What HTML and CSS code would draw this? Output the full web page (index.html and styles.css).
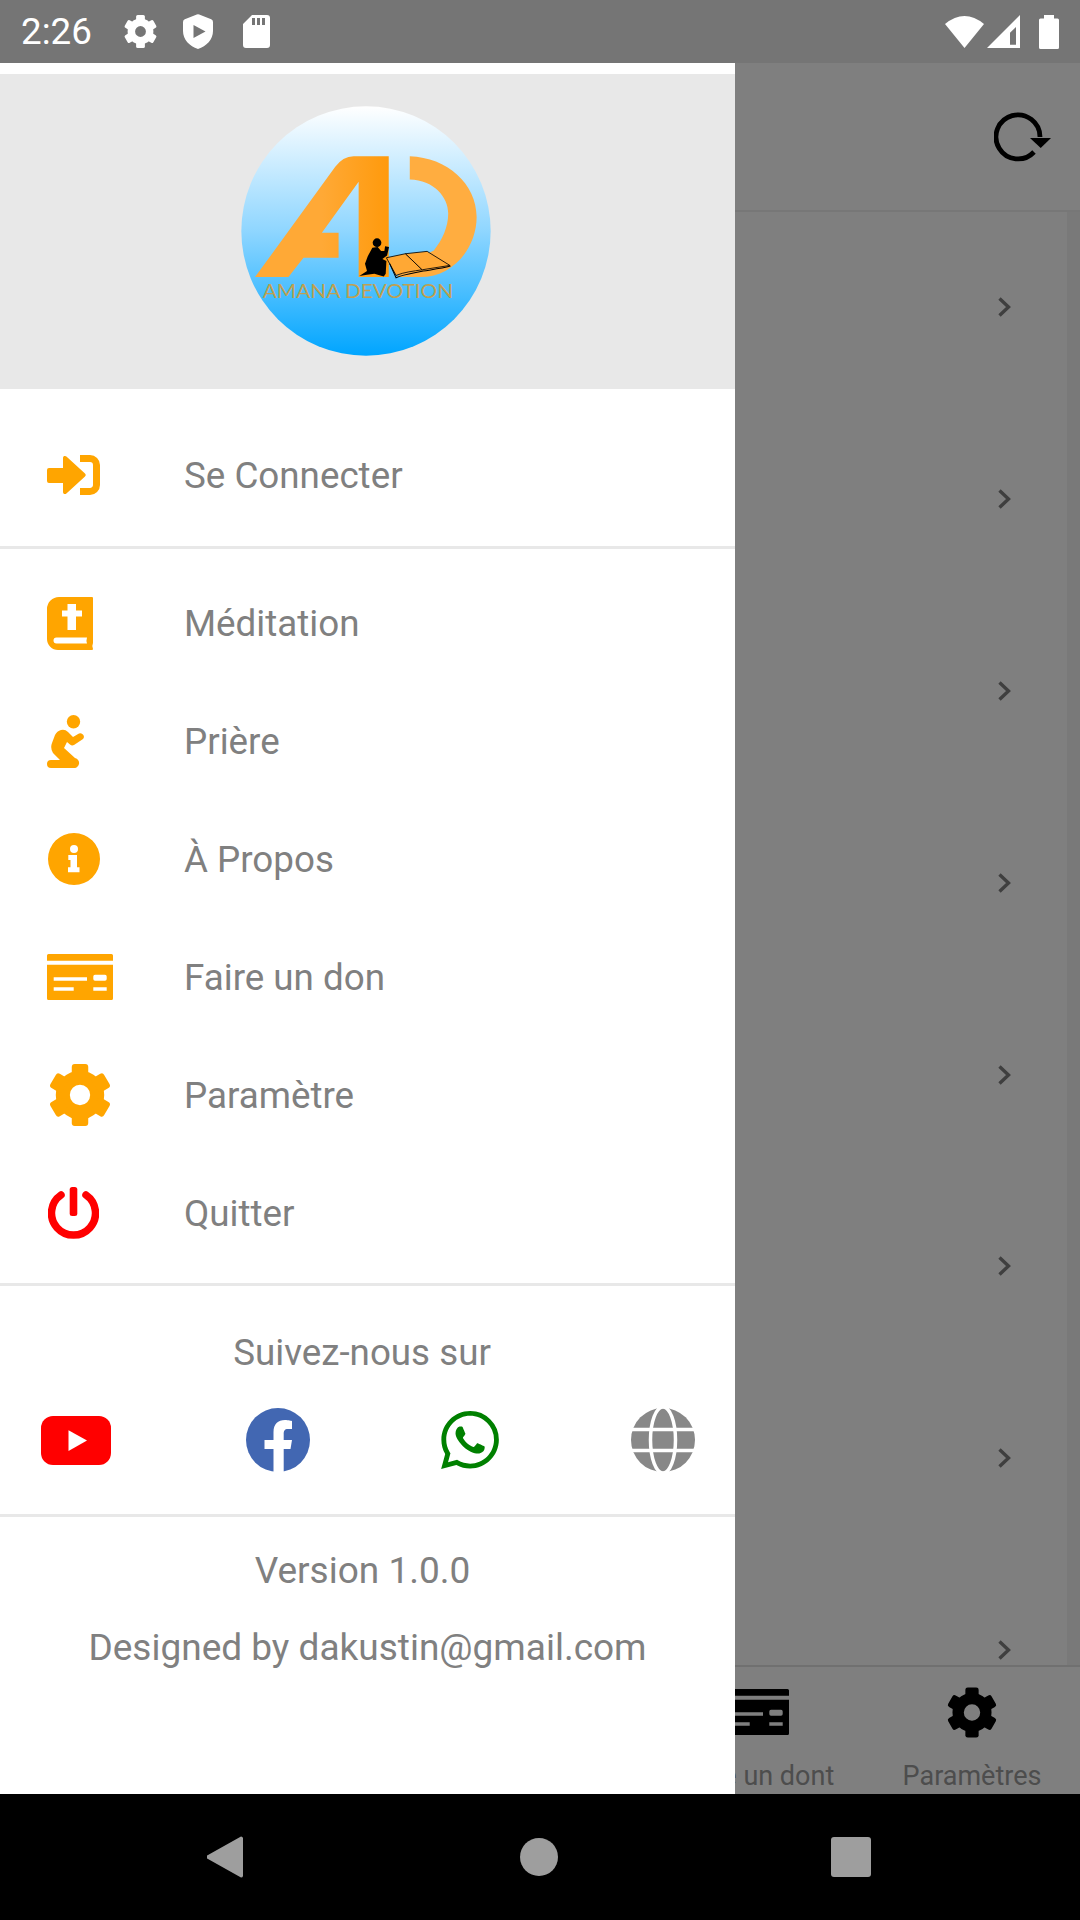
FILE: index.html
```html
<!DOCTYPE html>
<html lang="fr">
<head>
<meta charset="utf-8">
<title>Amana Devotion</title>
<link rel="stylesheet" href="styles.css">
</head>
<body>
<svg class="defs" width="0" height="0" aria-hidden="true">
  <symbol id="gear" viewBox="0 0 64 64">
    <circle cx="32" cy="32" r="17.75" fill="none" stroke="currentColor" stroke-width="14.5"/>
    <g fill="currentColor">
      <rect x="23.5" y="0" width="17" height="14" rx="3"/>
      <rect x="23.5" y="0" width="17" height="14" rx="3" transform="rotate(60 32 32)"/>
      <rect x="23.5" y="0" width="17" height="14" rx="3" transform="rotate(120 32 32)"/>
      <rect x="23.5" y="0" width="17" height="14" rx="3" transform="rotate(180 32 32)"/>
      <rect x="23.5" y="0" width="17" height="14" rx="3" transform="rotate(240 32 32)"/>
      <rect x="23.5" y="0" width="17" height="14" rx="3" transform="rotate(300 32 32)"/>
    </g>
  </symbol>
  <symbol id="card" viewBox="0 0 66 46">
    <path fill="currentColor" d="M1.5 0H64.5A1.5 1.5 0 0 1 66 1.5V6.7H0V1.500A1.500 1.500 0 0 1 1.500 0Z"/>
    <path fill="currentColor" fill-rule="evenodd" d="M0 10.700H66V44.500A1.500 1.500 0 0 1 64.500 46H1.500A1.500 1.500 0 0 1 0 44.500ZM6.700 23.300V26.700H40V23.300ZM6.700 33.300V36.700H26.700V33.300ZM48 20.700A1.700 1.700 0 0 0 46.300 22.400V25A1.700 1.700 0 0 0 48 26.700H58A1.700 1.700 0 0 0 59.700 25V22.400A1.700 1.700 0 0 0 58 20.700ZM46.300 33.300V36.700H59.700V33.300Z"/>
  </symbol>
</svg>

<div class="screen">
  <header class="status">
    <div class="status-left">
      <span class="clock">2:26</span>
      <svg class="st-gear"><use href="#gear"/></svg>
      <svg class="st-shield" viewBox="0 0 30 35"><path fill-rule="evenodd" d="M13.800.400L1.800 5.200A3 3 0 0 0 0 7.900V17C0 25.500 6.500 32.300 15 35 23.500 32.300 30 25.500 30 17V7.900A3 3 0 0 0 28.200 5.200L16.200.400A3 3 0 0 0 13.800.400ZM10.500 11L22.500 17.500 10.500 24Z"/></svg>
      <svg class="st-sd" viewBox="0 0 27 33"><path fill-rule="evenodd" d="M9 0H24A3 3 0 0 1 27 3V30A3 3 0 0 1 24 33H3A3 3 0 0 1 0 30V9ZM9 3V10H12V3ZM14 3V10H17V3ZM19 3V10H22V3Z"/></svg>
    </div>
    <div class="status-right">
      <svg class="st-wifi" viewBox="0 0 39 32"><path d="M0 8Q19.500 -8 39 8L19.500 32Z"/></svg>
      <svg class="st-signal" viewBox="0 0 33 33"><path fill-rule="evenodd" d="M0 33L33 0V33ZM23 17.700V29.700H29V12Z"/></svg>
      <svg class="st-battery" viewBox="0 0 20 34"><path d="M5 0H15V3.500H18.500A1.500 1.500 0 0 1 20 5V32.500A1.500 1.500 0 0 1 18.500 34H1.500A1.500 1.500 0 0 1 0 32.500V5A1.500 1.500 0 0 1 1.500 3.500H5Z"/></svg>
    </div>
  </header>

  <div class="app">
    <div class="appbar">
      <svg class="refresh" viewBox="0 0 60 60"><path class="refresh-arc" d="M40 44A22 22 0 1 1 46 29"/><path d="M36 30H57L46.700 40Z"/></svg>
    </div>
    <div class="list">
      <div class="list-rows">
        <div class="list-row"><svg class="chev" viewBox="0 0 13 20"><path d="M1.500 1.500L10.500 10L1.500 18.500"/></svg></div>
        <div class="list-row"><svg class="chev" viewBox="0 0 13 20"><path d="M1.500 1.500L10.500 10L1.500 18.500"/></svg></div>
        <div class="list-row"><svg class="chev" viewBox="0 0 13 20"><path d="M1.500 1.500L10.500 10L1.500 18.500"/></svg></div>
        <div class="list-row"><svg class="chev" viewBox="0 0 13 20"><path d="M1.500 1.500L10.500 10L1.500 18.500"/></svg></div>
        <div class="list-row"><svg class="chev" viewBox="0 0 13 20"><path d="M1.500 1.500L10.500 10L1.500 18.500"/></svg></div>
        <div class="list-row"><svg class="chev" viewBox="0 0 13 20"><path d="M1.500 1.500L10.500 10L1.500 18.500"/></svg></div>
        <div class="list-row"><svg class="chev" viewBox="0 0 13 20"><path d="M1.500 1.500L10.500 10L1.500 18.500"/></svg></div>
        <div class="list-row"><svg class="chev" viewBox="0 0 13 20"><path d="M1.500 1.500L10.500 10L1.500 18.500"/></svg></div>
      </div>
      <div class="list-edge"></div>
    </div>
    <nav class="tabs">
      <div class="tab tab-empty"></div>
      <div class="tab tab-empty"></div>
      <div class="tab tab-empty"></div>
      <div class="tab"><svg class="tab-card"><use href="#card"/></svg><span class="tab-label">Faire un dont</span></div>
      <div class="tab"><svg class="tab-gear"><use href="#gear"/></svg><span class="tab-label">Paramètres</span></div>
    </nav>
    <div class="scrim"></div>

    <aside class="drawer">
      <div class="drawer-head">
        <svg class="logo" viewBox="64 18 746 748">
          <defs>
            <linearGradient id="sky" x1="0" y1="0" x2="0" y2="1">
              <stop offset="0" stop-color="#ffffff"/>
              <stop offset="0.5" stop-color="#8fd6ff"/>
              <stop offset="1" stop-color="#00a5ff"/>
            </linearGradient>
            <linearGradient id="amber" x1="105" y1="0" x2="505" y2="0" gradientUnits="userSpaceOnUse">
              <stop offset="0.5" stop-color="#ffa936"/>
              <stop offset="1" stop-color="#ff9a0c"/>
            </linearGradient>
          </defs>
          <circle cx="437" cy="392" r="373" fill="url(#sky)"/>
          <path fill="url(#amber)" d="M105 530L345 200Q368 168 400 168H505V530H415V245L305 397H355V472H250L205 530Z"/>
          <path fill="#ffad40" d="M568 168C680 172 768 250 768 350C768 440 700 530 600 530L530 530L560 490L640 450C665 420 683 380 683 340C683 290 640 240 568 238Z"/>
          <g transform="translate(390 390)">
            <circle cx="80" cy="37" r="13"/>
            <path d="M27 137L42 127L50 122L44 100L52 78L66 52L82 50L92 62L102 62L104 48L116 50L110 75L96 86L108 92L106 130L100 138L72 130L50 133Z"/>
            <path class="book" d="M108 82L165 70L215 118C190 122 160 125 137 135Z"/>
            <path class="book" d="M165 70L230 63L298 105L215 118Z"/>
            <path class="book-edge" d="M118 100L137 142C165 130 195 128 218 122C240 118 270 115 300 107"/>
          </g>
          <text class="logo-text" x="128" y="592" textLength="570" lengthAdjust="spacingAndGlyphs">AMANA DEVOTION</text>
        </svg>
      </div>

      <div class="section section-login">
        <a class="row">
          <span class="row-icon"><svg class="ic-signin" viewBox="0 0 53 40"><path d="M0 15A2 2 0 0 1 2 13H16V3A2 2 0 0 1 19.400 1.500L38 18.500A2 2 0 0 1 38 21.500L19.400 38.500A2 2 0 0 1 16 37V28H2A2 2 0 0 1 0 26Z"/><path class="ic-bracket" d="M33 3.500H43A6.500 6.500 0 0 1 49.500 10V30A6.500 6.500 0 0 1 43 36.500H33"/></svg></span>
          <span class="row-label">Se Connecter</span>
        </a>
      </div>

      <div class="section section-menu">
        <a class="row">
          <span class="row-icon"><svg class="ic-bible" viewBox="0 0 46 53"><path fill-rule="evenodd" d="M12 0H45A1 1 0 0 1 46 1V46Q44.500 49.500 46 52A1 1 0 0 1 45 53H11A11 11 0 0 1 0 42V12A12 12 0 0 1 12 0ZM20.500 7V13.500H15V19.500H20.500V33H29V19.500H35V13.500H29V7ZM9.500 40.500A3 3 0 0 0 9.500 46.500H40Q39 43.500 40 40.500Z"/></svg></span>
          <span class="row-label">Méditation</span>
        </a>
        <a class="row">
          <span class="row-icon"><svg class="ic-pray" viewBox="0 0 40 53"><circle cx="26.500" cy="6.700" r="6.700"/><path d="M14 15Q18 14 21 17L26 22L32 18.500A3.500 3.500 0 0 1 36 24L27 30A3.500 3.500 0 0 1 23 29.500L20 27L17 33L28 43A4 4 0 0 1 26 53H4A4 4 0 0 1 4 45H13L6 38Q3 33 5 28L8 20Q10 16 14 15Z"/></svg></span>
          <span class="row-label">Prière</span>
        </a>
        <a class="row">
          <span class="row-icon"><svg class="ic-info" viewBox="0 0 52 52"><path fill-rule="evenodd" d="M26 0A26 26 0 1 1 26 52A26 26 0 1 1 26 0ZM26 12A4 4 0 1 0 26 20A4 4 0 1 0 26 12ZM20.300 22V27H22.500V34.300H20V39.300H31.500V34.300H29V22Z"/></svg></span>
          <span class="row-label">À Propos</span>
        </a>
        <a class="row">
          <span class="row-icon"><svg class="ic-card"><use href="#card"/></svg></span>
          <span class="row-label">Faire un don</span>
        </a>
        <a class="row">
          <span class="row-icon"><svg class="ic-gear"><use href="#gear"/></svg></span>
          <span class="row-label">Paramètre</span>
        </a>
        <a class="row">
          <span class="row-icon"><svg class="ic-power" viewBox="0 0 51 52"><path class="ic-power-arc" d="M13 8A22 22 0 1 0 38 8"/><rect x="21.700" y="0" width="7.600" height="29" rx="2.500"/></svg></span>
          <span class="row-label">Quitter</span>
        </a>
      </div>

      <div class="section section-social">
        <p class="social-title">Suivez-nous sur</p>
        <div class="social-icons">
          <svg class="so-yt" viewBox="0 0 70 49"><rect width="70" height="49" rx="12" fill="#ff0000"/><path fill="#fff" d="M27.500 14.300L46 24.500L27.500 35Z"/></svg>
          <svg class="so-fb" viewBox="0 0 64 64"><circle cx="32" cy="32" r="32" fill="#4267b2"/><path fill="#fff" d="M27.500 64V41H18.500V32H27.500V24C27.500 16 32 12 39 12C42 12 46 13 46 13V21H42C38.500 21 37.700 23 37.700 26V32H46L44.500 41H37.700V64Z"/></svg>
          <svg class="so-wa" viewBox="0 0 24 24"><path fill="#008000" d="M17.472 14.382c-.297-.149-1.758-.867-2.030-.967-.273-.099-.471-.148-.670.150-.197.297-.767.966-.940 1.164-.173.199-.347.223-.644.075-.297-.150-1.255-.463-2.390-1.475-.883-.788-1.480-1.761-1.653-2.059-.173-.297-.018-.458.130-.606.134-.133.298-.347.446-.520.149-.174.198-.298.298-.497.099-.198.050-.371-.025-.520-.075-.149-.669-1.612-.916-2.207-.242-.579-.487-.500-.669-.510-.173-.008-.371-.010-.570-.010-.198 0-.520.074-.792.372-.272.297-1.040 1.016-1.040 2.479 0 1.462 1.065 2.875 1.213 3.074.149.198 2.096 3.200 5.077 4.487.709.306 1.262.489 1.694.625.712.227 1.360.195 1.871.118.571-.085 1.758-.719 2.006-1.413.248-.694.248-1.289.173-1.413-.074-.124-.272-.198-.570-.347m-5.421 7.403h-.004a9.870 9.870 0 01-5.031-1.378l-.361-.214-3.741.982.998-3.648-.235-.374a9.860 9.860 0 01-1.510-5.260c.001-5.450 4.436-9.884 9.888-9.884 2.640 0 5.122 1.030 6.988 2.898a9.825 9.825 0 012.893 6.994c-.003 5.450-4.437 9.884-9.885 9.884m8.413-18.297A11.815 11.815 0 0012.050 0C5.495 0 .160 5.335.157 11.892c0 2.096.547 4.142 1.588 5.945L.057 24l6.305-1.654a11.882 11.882 0 005.683 1.448h.005c6.554 0 11.890-5.335 11.893-11.893a11.821 11.821 0 00-3.480-8.413z"/></svg>
          <svg class="so-web" viewBox="0 0 64 64"><circle cx="32" cy="32" r="32" fill="#888888"/><g class="web-lines"><ellipse cx="32" cy="32" rx="12.500" ry="33"/><path d="M0 21.500H64M0 42.500H64"/></g></svg>
        </div>
      </div>

      <div class="section section-about">
        <p class="about-version">Version 1.0.0</p>
        <p class="about-credit">Designed by dakustin@gmail.com</p>
      </div>
    </aside>
  </div>

  <footer class="navbar">
    <svg class="nav-back" viewBox="0 0 36 42"><path d="M34 0.500A2 2 0 0 1 36 2V40A2 2 0 0 1 34 41.500L1 23A2.200 2.200 0 0 1 1 19Z"/></svg>
    <span class="nav-home"></span>
    <span class="nav-recent"></span>
  </footer>
</div>
</body>
</html>
```

FILE: styles.css
```css
* { box-sizing: border-box; }
html, body { margin: 0; padding: 0; }
body { background: #000; font-family: Roboto, "Liberation Sans", sans-serif; }
p { margin: 0; }
svg { display: block; flex: none; }
.defs { position: absolute; }

.screen { width: 1080px; height: 1920px; display: flex; flex-direction: column; overflow: hidden; }

/* status bar */
.status { height: 63px; flex: none; background: #757575; color: #fff; display: flex; justify-content: space-between; align-items: center; padding: 0 21px 0 21px; }
.status svg { fill: #fff; }
.status-left { display: flex; align-items: center; }
.status-right { display: flex; align-items: center; }
.clock { font-size: 36.750px; line-height: 63px; width: 103px; }
.st-gear { width: 33px; height: 33px; margin-right: 26px; color: #fff; }
.st-shield { width: 30px; height: 35px; margin-right: 30px; }
.st-sd { width: 27px; height: 33px; }
.st-wifi { width: 39px; height: 32px; margin-right: 3px; }
.st-signal { width: 33px; height: 33px; margin-right: 19px; }
.st-battery { width: 20px; height: 34px; }

/* underlying page */
.app { flex: 1; position: relative; display: flex; flex-direction: column; background: #fff; overflow: hidden; }
.appbar { height: 149px; flex: none; display: flex; justify-content: flex-end; align-items: center; padding: 3px 26px 0 0; border-bottom: 2px solid #eeeeee; }
.refresh { width: 60px; height: 60px; }
.refresh-arc { fill: none; stroke: #000; stroke-width: 4.800px; }
.list { flex: 1; min-height: 0; display: flex; overflow: hidden; }
.list-rows { flex: 1; min-width: 0; display: flex; flex-direction: column; margin-top: -1px; }
.list-row { height: 191.900px; flex: none; display: flex; justify-content: flex-end; align-items: center; padding-right: 56px; }
.list-edge { width: 13px; background: #f2f2f2; }
.chev { width: 13px; height: 20px; }
.chev path { fill: none; stroke: #7e7e7e; stroke-width: 3.400px; }
.tabs { height: 129px; flex: none; display: grid; grid-template-columns: repeat(5, 216px); border-top: 2px solid #e0e0e0; }
.tab { display: flex; flex-direction: column; align-items: center; padding-top: 20px; white-space: nowrap; min-width: 0; }
.tab-card { width: 66px; height: 46px; margin: 2px 0 3px; color: #000; }
.tab-gear { width: 50px; height: 51px; color: #000; }
.tab-label { font-size: 27px; line-height: 34px; color: #9a9a9a; margin-top: 21px; }

.scrim { position: absolute; inset: 0; background: rgba(0, 0, 0, 0.5); }

/* drawer */
.drawer { position: absolute; left: 0; top: 0; bottom: 0; width: 735px; background: #fff; padding-top: 11px; display: flex; flex-direction: column; }
.drawer-head { height: 315px; flex: none; background: #e8e8e8; display: flex; justify-content: center; align-items: center; padding: 0 3px 2px 0; }
.logo { width: 250px; height: 250px; }
.book { fill: #ffa834; stroke: #000; stroke-width: 2.500px; stroke-linejoin: round; }
.book-edge { fill: none; stroke: #000; stroke-width: 3px; }
.logo-text { font-family: Lato, "Liberation Sans", sans-serif; font-size: 55px; font-weight: 400; fill: #c0a050; }

.section { border-bottom: 3px solid #e8e8e8; }
.section-login { padding: 27px 0 12px; }
.section-menu { padding: 15px 0 11px; }
.row { height: 118px; display: flex; align-items: center; padding-left: 47px; }
.row-icon { width: 137px; flex: none; }
.row-label { font-size: 36.750px; color: #808080; }
.ic-signin { width: 53px; height: 40px; fill: #ffa500; }
.ic-bracket { fill: none; stroke: #ffa500; stroke-width: 7px; }
.ic-bible { width: 46px; height: 53px; fill: #ffa500; }
.ic-pray { width: 40px; height: 53px; fill: #ffa500; }
.ic-info { width: 52px; height: 52px; fill: #ffa500; margin-left: 1px; }
.ic-card { width: 66px; height: 46px; color: #ffa500; }
.ic-gear { width: 62px; height: 64px; color: #ffa500; margin-left: 2px; }
.ic-power { width: 51px; height: 52px; fill: #ff0000; margin-left: 1px; }
.ic-power-arc { fill: none; stroke: #ff0000; stroke-width: 7.500px; stroke-linecap: round; }

.section-social { padding: 47px 40px 0 41px; height: 231px; }
.social-title { font-size: 36.750px; line-height: 40px; color: #808080; text-align: center; padding-right: 12px; }
.social-icons { display: flex; justify-content: space-between; align-items: center; margin-top: 35px; }
.so-yt { width: 70px; height: 49px; }
.so-fb { width: 64px; height: 64px; margin-left: 3px; }
.so-wa { width: 58px; height: 58px; }
.so-web { width: 64px; height: 64px; }
.web-lines { fill: none; stroke: #fff; stroke-width: 3.500px; }

.section-about { border-bottom: 0; text-align: center; padding-top: 34px; }
.about-version { font-size: 37px; line-height: 40px; color: #808080; padding-right: 10px; }
.about-credit { font-size: 37px; line-height: 40px; color: #808080; margin-top: 37px; }

/* nav bar */
.navbar { height: 126px; flex: none; background: #000; display: flex; align-items: center; justify-content: space-between; padding: 0 209px 0 207px; }
.nav-back { width: 36px; height: 42px; fill: #9e9e9e; }
.nav-home { width: 38px; height: 38px; border-radius: 50%; background: #9e9e9e; margin-left: 4px; }
.nav-recent { width: 40px; height: 40px; border-radius: 3px; background: #9e9e9e; }
```
